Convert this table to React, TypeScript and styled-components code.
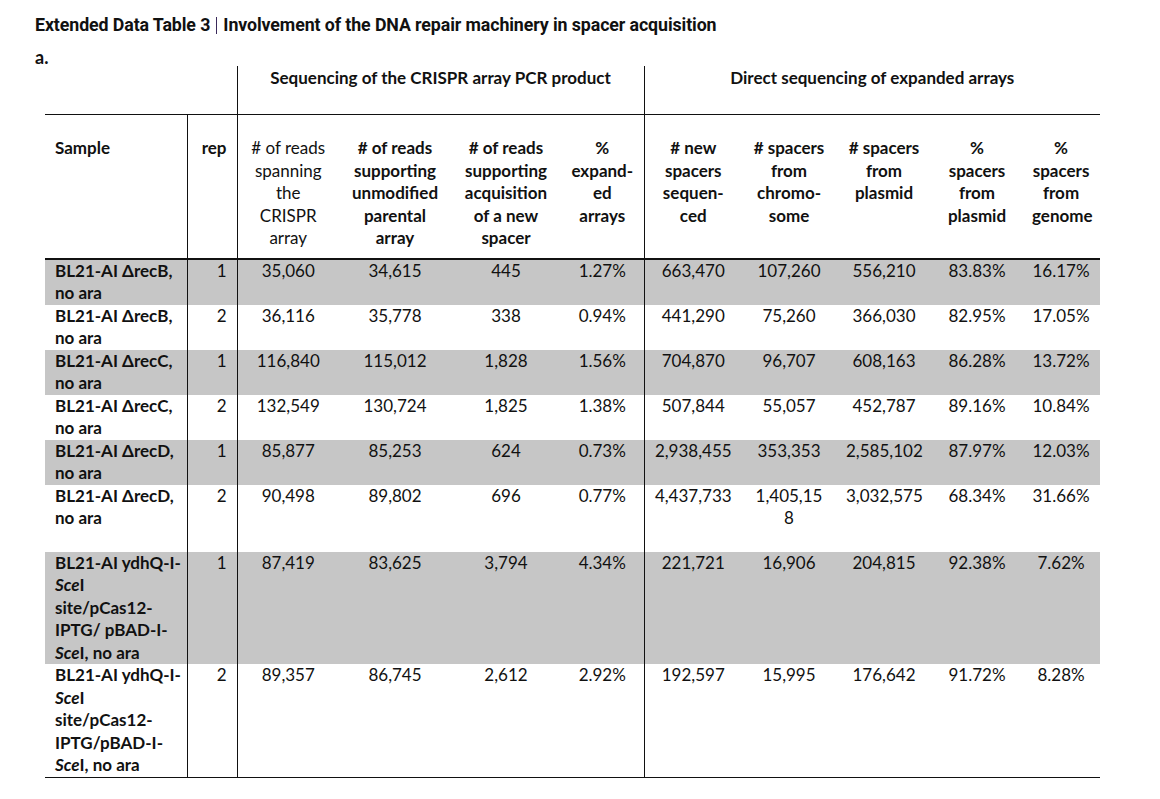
import React from 'react';
import styled, { createGlobalStyle } from 'styled-components';

const GlobalStyle = createGlobalStyle`
  body {
    margin: 0;
    background: #fff;
    color: #111;
    font-family: 'Lato', 'Open Sans', sans-serif;
  }
`;

const Page = styled.div`
  width: 1160px;
  height: 799px;
  padding: 14px 0 0 35px;
  box-sizing: border-box;
`;

const Title = styled.h1`
  margin: 0;
  display: flex;
  align-items: center;
  gap: 6px;
  font-family: 'Liberation Sans Narrow', 'Roboto', sans-serif;
  font-weight: 700;
  font-size: 17.8px;
  line-height: 22px;
  letter-spacing: -0.1px;
  color: #111;
`;

const TitleBar = styled.span`
  display: inline-block;
  width: 1px;
  height: 17px;
  background: #3a2a5a;
`;

const PartLabel = styled.div`
  margin-top: 10px;
  font-weight: 700;
  font-size: 18px;
  line-height: 22px;
`;

const Table = styled.table`
  margin: -2px 0 0 10px;
  width: 1055px;
  border-collapse: collapse;
  table-layout: fixed;
  font-size: 17px;
  line-height: 22.5px;
`;

const GroupCell = styled.th<{ $line?: boolean }>`
  height: 47px;
  padding: 1px 0 0;
  vertical-align: top;
  text-align: center;
  font-weight: 700;
  border-left: ${(p) => (p.$line ? '1.5px solid #111' : 'none')};
  border-bottom: 1.5px solid #111;
`;

const HeadCell = styled.th<{ $align?: string; $line?: boolean; $light?: boolean }>`
  padding: 22px 10px 8px;
  vertical-align: top;
  white-space: nowrap;
  text-align: ${(p) => p.$align || 'center'};
  font-weight: ${(p) => (p.$light ? 400 : 700)};
  border-left: ${(p) => (p.$line ? '1.5px solid #111' : 'none')};
  border-bottom: 2px solid #111;
`;

const Row = styled.tr<{ $shade?: boolean; $tall?: boolean }>`
  background: ${(p) => (p.$shade ? '#c6c6c6' : '#fff')};
  height: ${(p) => (p.$tall ? '67px' : 'auto')};
`;

const Cell = styled.td<{ $align?: string; $line?: boolean; $bold?: boolean }>`
  padding: 0 10px;
  vertical-align: top;
  white-space: nowrap;
  text-align: ${(p) => p.$align || 'center'};
  font-weight: ${(p) => (p.$bold ? 700 : 400)};
  border-left: ${(p) => (p.$line ? '1.5px solid #111' : 'none')};
`;

const LastRow = styled(Row)`
  td {
    border-bottom: 1.5px solid #111;
  }
`;

const widths = [142, 50, 102, 112, 110, 83, 98, 94, 96, 90, 78];

type Sample = {
  name: React.ReactNode;
  rep: number;
  values: React.ReactNode[];
  tall?: boolean;
};

const SceI = () => (
  <>
    <i>Sce</i>I
  </>
);

const samples: Sample[] = [
  { name: <>BL21-AI ΔrecB,<br />no ara</>, rep: 1, values: ['35,060', '34,615', '445', '1.27%', '663,470', '107,260', '556,210', '83.83%', '16.17%'] },
  { name: <>BL21-AI ΔrecB,<br />no ara</>, rep: 2, values: ['36,116', '35,778', '338', '0.94%', '441,290', '75,260', '366,030', '82.95%', '17.05%'] },
  { name: <>BL21-AI ΔrecC,<br />no ara</>, rep: 1, values: ['116,840', '115,012', '1,828', '1.56%', '704,870', '96,707', '608,163', '86.28%', '13.72%'] },
  { name: <>BL21-AI ΔrecC,<br />no ara</>, rep: 2, values: ['132,549', '130,724', '1,825', '1.38%', '507,844', '55,057', '452,787', '89.16%', '10.84%'] },
  { name: <>BL21-AI ΔrecD,<br />no ara</>, rep: 1, values: ['85,877', '85,253', '624', '0.73%', '2,938,455', '353,353', '2,585,102', '87.97%', '12.03%'] },
  { name: <>BL21-AI ΔrecD,<br />no ara</>, rep: 2, tall: true, values: ['90,498', '89,802', '696', '0.77%', '4,437,733', <>1,405,15<br />8</>, '3,032,575', '68.34%', '31.66%'] },
  {
    name: <>BL21-AI ydhQ-I-<br /><SceI /><br />site/pCas12-<br />IPTG/ pBAD-I-<br /><SceI />, no ara</>,
    rep: 1,
    values: ['87,419', '83,625', '3,794', '4.34%', '221,721', '16,906', '204,815', '92.38%', '7.62%'],
  },
  {
    name: <>BL21-AI ydhQ-I-<br /><SceI /><br />site/pCas12-<br />IPTG/pBAD-I-<br /><SceI />, no ara</>,
    rep: 2,
    values: ['89,357', '86,745', '2,612', '2.92%', '192,597', '15,995', '176,642', '91.72%', '8.28%'],
  },
];

const headers: { text: React.ReactNode; light?: boolean }[] = [
  { text: <># of reads<br />spanning<br />the<br />CRISPR<br />array</>, light: true },
  { text: <># of reads<br />supporting<br />unmodified<br />parental<br />array</> },
  { text: <># of reads<br />supporting<br />acquisition<br />of a new<br />spacer</> },
  { text: <>%<br />expand-<br />ed<br />arrays</> },
  { text: <># new<br />spacers<br />sequen-<br />ced</> },
  { text: <># spacers<br />from<br />chromo-<br />some</> },
  { text: <># spacers<br />from<br />plasmid</> },
  { text: <>%<br />spacers<br />from<br />plasmid</> },
  { text: <>%<br />spacers<br />from<br />genome</> },
];

const SampleRow = ({ s, shade, last }: { s: Sample; shade: boolean; last: boolean }) => {
  const R = last ? LastRow : Row;
  return (
    <R $shade={shade} $tall={s.tall}>
      <Cell $align="left" $bold>{s.name}</Cell>
      <Cell $align="right" $line>{s.rep}</Cell>
      {s.values.map((v, i) => (
        <Cell key={i} $line={i === 0 || i === 4}>{v}</Cell>
      ))}
    </R>
  );
};

export default function App() {
  return (
    <Page>
      <GlobalStyle />
      <Title>
        Extended Data Table 3 <TitleBar /> Involvement of the DNA repair machinery in spacer acquisition
      </Title>
      <PartLabel>a.</PartLabel>
      <Table>
        <colgroup>
          {widths.map((w, i) => (
            <col key={i} style={{ width: w }} />
          ))}
        </colgroup>
        <thead>
          <tr>
            <GroupCell colSpan={2} />
            <GroupCell colSpan={4} $line>Sequencing of the CRISPR array PCR product</GroupCell>
            <GroupCell colSpan={5} $line>Direct sequencing of expanded arrays</GroupCell>
          </tr>
          <tr>
            <HeadCell $align="left">Sample</HeadCell>
            <HeadCell $align="right" $line>rep</HeadCell>
            {headers.map((h, i) => (
              <HeadCell key={i} $line={i === 0 || i === 4} $light={h.light}>{h.text}</HeadCell>
            ))}
          </tr>
        </thead>
        <tbody>
          {samples.map((s, i) => (
            <SampleRow key={i} s={s} shade={i % 2 === 0} last={i === samples.length - 1} />
          ))}
        </tbody>
      </Table>
    </Page>
  );
}
